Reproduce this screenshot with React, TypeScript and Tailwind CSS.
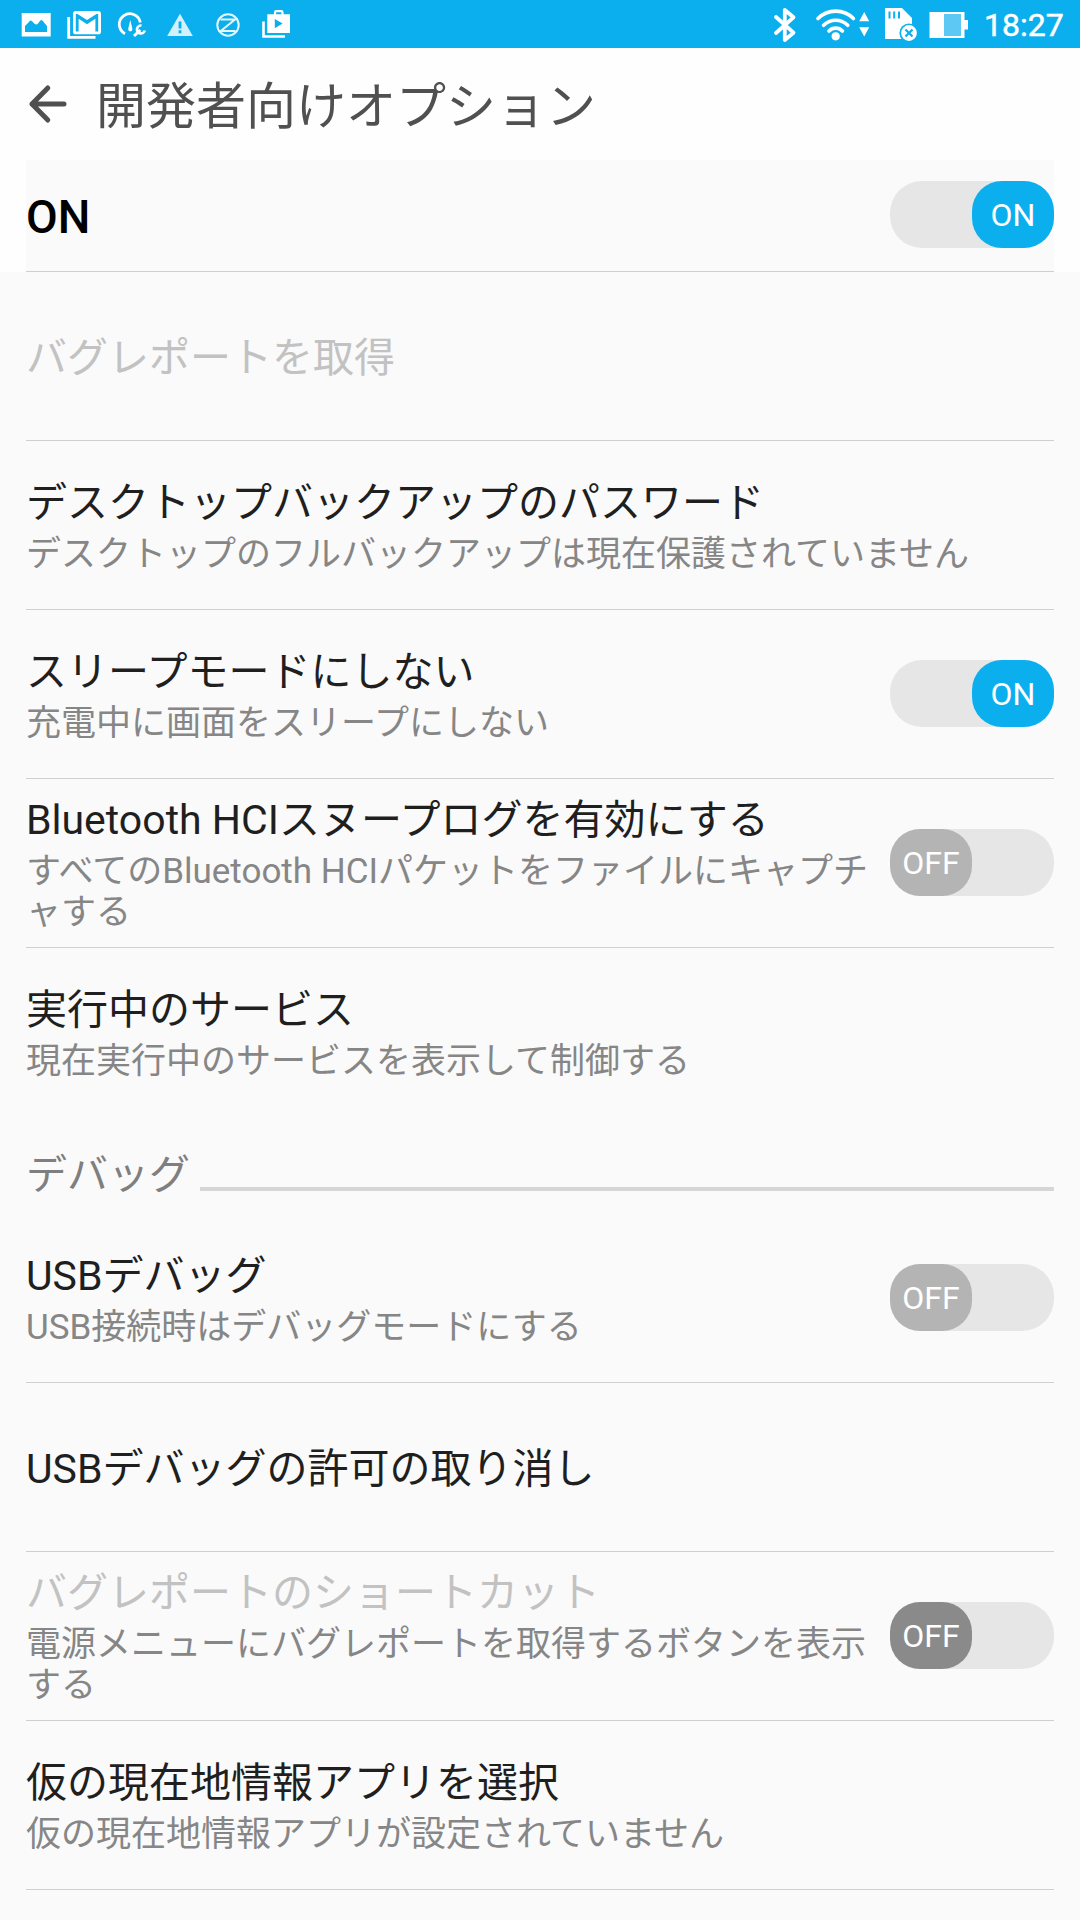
import React from "react";

const jp = "font-[Roboto,'Noto_Sans_CJK_JP',sans-serif]";

function StatusBar() {
  return (
    <div className="flex h-12 w-full items-center bg-[#0cafee] pl-4 text-white">
      <svg width="42" height="48" viewBox="16 0 42 48">
        <rect x="21.7" y="13" width="29" height="23.5" fill="#fff" />
        <path d="M25 32V26C27 24 29 21.5 30.5 20.5C32 20 34 24.5 36.5 24.5C38.5 24.5 39.5 20 41.5 20C43 20.5 45 24 47 26V32Z" fill="#0cafee" />
      </svg>
      <svg width="50" height="48" viewBox="58 0 50 48" fill="none" stroke="#fff">
        <path d="M68.7 17V37.3H95.5" strokeWidth="2.8" />
        <g transform="translate(70.2 5.2) scale(1.4 1.456)" stroke="none">
          <rect x="2" y="4" width="20" height="16" rx="2" fill="#fff" />
          <path d="M20 18H18V9.25L12 13L6 9.25V18H4V6H5.2L12 10.25L18.8 6H20Z" fill="#0cafee" />
        </g>
      </svg>
      <svg width="48" height="48" viewBox="108 0 48 48" fill="none" stroke="#fff">
        <path d="M125 33.8A10.6 10.6 0 1 1 140.3 22.5" strokeWidth="2.8" />
        <path d="M130.3 20L132.3 28.5A2.1 2.1 0 1 1 128.3 28.5Z" fill="#fff" stroke="none" />
        <path d="M134 36L140.3 30" strokeWidth="3" />
        <path d="M141.5 25.5A4 4 0 1 0 144.8 30.5" strokeWidth="2.6" />
      </svg>
      <svg width="48" height="48" viewBox="156 0 48 48">
        <path d="M180 13.8L192.8 36H167.2Z" fill="#d3f1fd" />
        <path d="M180 21.5V28.5M180 30.3V33.2" stroke="#0cafee" strokeWidth="2.8" />
      </svg>
      <svg width="48" height="48" viewBox="204 0 48 48" fill="none" stroke="#e4f6fe" strokeWidth="2">
        <circle cx="228" cy="25" r="10.7" />
        <path d="M220.5 19.5H235L220.8 31H235.5" />
      </svg>
      <svg width="48" height="48" viewBox="252 0 48 48" fill="none" stroke="#fff">
        <path d="M263.5 21.5V36.5H285" strokeWidth="2.6" />
        <path d="M275 15V12.5Q275 11.2 276.3 11.2H281.2Q282.5 11.2 282.5 12.5V15" strokeWidth="2.2" />
        <path d="M267.3 14.3H290V33H267.3ZM274.8 19V28.3L282.6 23.6Z" fill="#fff" fillRule="evenodd" stroke="none" />
      </svg>

      <svg className="ml-[470px]" width="30" height="48" viewBox="770 0 30 48" fill="none" stroke="#fff" strokeWidth="3.8">
        <path d="M776 17L793.5 32.7L784.8 40V10L793.5 17.3L776 33" strokeLinejoin="round" strokeLinecap="round" />
      </svg>
      <svg className="ml-[10px]" width="66" height="48" viewBox="810 0 66 48" fill="none" stroke="#fff">
        <g strokeWidth="3.7" strokeLinecap="round">
          <path d="M818 18.5A25 25 0 0 1 853.4 18.5" />
          <path d="M823.6 25.3A17 17 0 0 1 847.8 25.3" />
          <path d="M829 31A9.3 9.3 0 0 1 842.4 31" />
        </g>
        <circle cx="835.7" cy="36.3" r="4.1" fill="#fff" stroke="none" />
        <path d="M864.2 12L869.2 21.3H859.2ZM864.2 36.6L859.2 27.3H869.2Z" fill="#fff" stroke="none" />
      </svg>
      <svg className="ml-1" width="42" height="48" viewBox="880 0 42 48">
        <path d="M885 8H902L912 18V39H885Z" fill="#fff" />
        <path d="M889.5 11.5V18.5M894.2 11.5V18.5M899 11.5V18.5" stroke="#0cafee" strokeWidth="2" />
        <circle cx="909" cy="33" r="9.6" fill="#0cafee" />
        <circle cx="909" cy="33" r="7.9" fill="#fff" />
        <path d="M905.5 29.5L912.5 36.5M912.5 29.5L905.5 36.5" stroke="#0cafee" strokeWidth="2.2" />
      </svg>
      <svg className="ml-1" width="48" height="48" viewBox="926 0 48 48">
        <path d="M929.5 12H964.5V20H968V29.5H964.5V38H929.5Z" fill="#fff" />
        <rect x="944" y="14" width="17" height="22" fill="#5cc8f3" />
      </svg>
      <span className="ml-[10px] pt-[2px] text-[32px] leading-[48px] [-webkit-text-stroke:0.5px_white]">18:27</span>
    </div>
  );
}

type SwitchState = "on" | "off" | "disabled";

function Switch({ state, top = "mt-[50px]" }: { state: SwitchState; top?: string }) {
  const knob =
    state === "on" ? "bg-[#0cafee]" : state === "off" ? "bg-[#b4b4b4]" : "bg-[#8a8a8a]";
  return (
    <div
      className={`${top} flex h-[67px] w-[164px] shrink-0 rounded-[32px] bg-[#e6e6e6] ${
        state === "on" ? "justify-end" : "justify-start"
      }`}
    >
      <div
        className={`flex h-[67px] w-[82px] items-center justify-center rounded-[30px] pt-px text-[32px] leading-none text-white ${knob}`}
      >
        {state === "on" ? "ON" : "OFF"}
      </div>
    </div>
  );
}

type RowProps = {
  title: string;
  sub?: string;
  state?: SwitchState;
  disabled?: boolean;
  last?: boolean;
};

function Row({ title, sub, state, disabled, last }: RowProps) {
  return (
    <div className={`mx-[26px] flex h-[169px] border-b ${last ? "border-transparent" : "border-[#cfcfcf]"}`}>
      <div className={`flex min-w-0 flex-1 flex-col justify-center ${sub ? "pb-[3px]" : "pt-[5px]"}`}>
        <div className={`text-[41px] leading-[61px] ${disabled ? "text-[#c2c2c2]" : "text-[#1f1f1f]"}`}>{title}</div>
        {sub && <div className="text-[35px] leading-[41px] break-all text-[#868686]">{sub}</div>}
      </div>
      {state && (
        <div className="ml-[18px]">
          <Switch state={state} />
        </div>
      )}
    </div>
  );
}

export default function App() {
  return (
    <div lang="ja" className={`h-[1920px] w-[1080px] overflow-hidden bg-[#fafafa] ${jp}`}>
      <StatusBar />
      <div className="bg-[#fefefe]">
        <div className="flex h-28 items-center pl-[26px]">
          <svg width="44" height="48" viewBox="26 90 44 48" fill="none" stroke="#505050" strokeWidth="5" strokeLinecap="round" strokeLinejoin="round">
            <path d="M64 114H32M47.8 98L32 114L47.8 130" />
          </svg>
          <h1 className="ml-[26px] pt-[5px] text-[50px] leading-[70px] text-[#505050]">開発者向けオプション</h1>
        </div>
        <div className="mx-[26px] flex h-28 justify-between border-b border-[#cfcfcf] bg-[#fafafa]">
          <span className="pt-[2px] text-[46px] leading-[111px] font-medium text-black">ON</span>
          <Switch state="on" top="mt-[21px]" />
        </div>
      </div>
      <Row title="バグレポートを取得" disabled />
      <Row title="デスクトップバックアップのパスワード" sub="デスクトップのフルバックアップは現在保護されていません" />
      <Row title="スリープモードにしない" sub="充電中に画面をスリープにしない" state="on" />
      <Row title="Bluetooth HCIスヌープログを有効にする" sub="すべてのBluetooth HCIパケットをファイルにキャプチャする" state="off" />
      <Row title="実行中のサービス" sub="現在実行中のサービスを表示して制御する" last />
      <div className="mx-[26px] flex h-[97px] items-start">
        <h2 className="mr-[10px] pt-[28px] text-[41px] leading-[61px] text-[#7f7f7f]">デバッグ</h2>
        <div className="mt-[70px] h-1 flex-1 bg-[#d6d6d6]" />
      </div>
      <Row title="USBデバッグ" sub="USB接続時はデバッグモードにする" state="off" />
      <Row title="USBデバッグの許可の取り消し" />
      <Row title="バグレポートのショートカット" sub="電源メニューにバグレポートを取得するボタンを表示する" state="disabled" disabled />
      <Row title="仮の現在地情報アプリを選択" sub="仮の現在地情報アプリが設定されていません" />
    </div>
  );
}
